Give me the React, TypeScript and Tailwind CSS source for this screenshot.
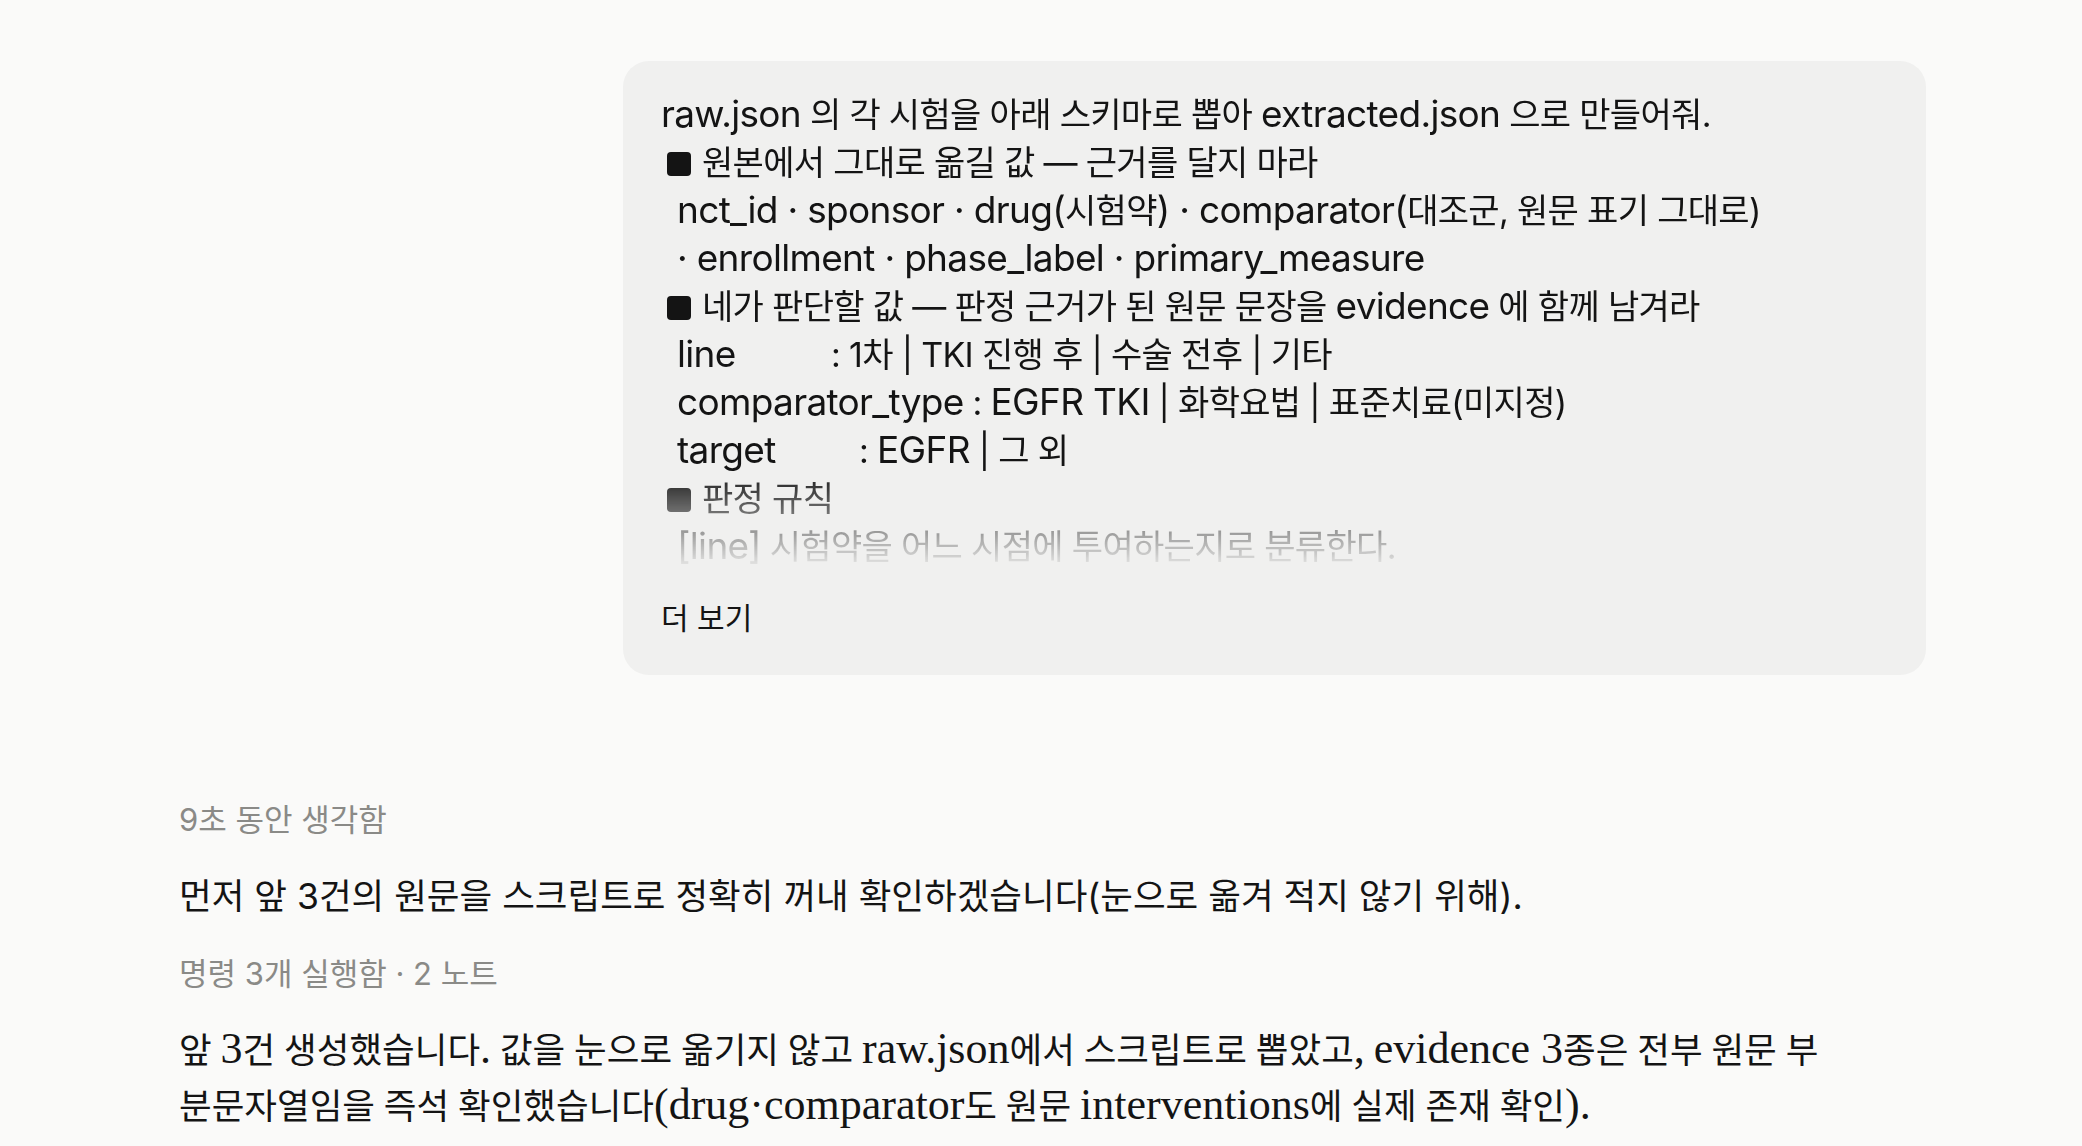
import React from "react";

const sans = "font-['Inter','Noto_Sans_CJK_KR',sans-serif]";

function Sq() {
  return <span className="inline-block w-[24px] h-[24px] rounded-[4px] bg-[#141414] align-[-1px] mr-[11px] ml-[6px]" />;
}

function L({ children }: { children: React.ReactNode }) {
  return <span className="text-[37px] leading-none">{children}</span>;
}

function S({ children }: { children: React.ReactNode }) {
  return <span className="text-[44px] leading-none">{children}</span>;
}

export default function App() {
  return (
    <div className="min-h-screen bg-[#fafaf9] text-[#141414]">
      <div className="w-[1747px] ml-[179px] pt-[61px]">
        {/* user bubble */}
        <div className="ml-auto w-[1303px] rounded-[26px] bg-[#f0f0ef] pl-[38px] pr-[38px] pt-[30px] pb-[39px]">
          <div
            className={`${sans} text-[34px] tracking-[-0.02em] leading-[48px] h-[480px] overflow-hidden whitespace-pre [mask-image:linear-gradient(to_bottom,black_79%,transparent_100%)]`}
          >
            <div><L>raw.json</L> 의 각 시험을 아래 스키마로 뽑아 <L>extracted.json</L> 으로 만들어줘.</div>
            <div><Sq />원본에서 그대로 옮길 값 — 근거를 달지 마라</div>
            <div className="pl-[16px]"><L>nct_id · sponsor · drug(</L>시험약<L>) · comparator(</L>대조군, 원문 표기 그대로)</div>
            <div className="pl-[16px]"><L>· enrollment · phase_label · primary_measure</L></div>
            <div><Sq />네가 판단할 값 — 판정 근거가 된 원문 문장을 <L>evidence</L> 에 함께 남겨라</div>
            <div className="pl-[16px]"><span className="inline-block w-[154px]"><L>line</L></span>: 1차 | TKI 진행 후 | 수술 전후 | 기타</div>
            <div className="pl-[16px]"><L>comparator_type</L> : <L>EGFR TKI</L> | 화학요법 | 표준치료(미지정)</div>
            <div className="pl-[16px]"><span className="inline-block w-[182px]"><L>target</L></span>: <L>EGFR</L> | 그 외</div>
            <div><Sq />판정 규칙</div>
            <div className="pl-[16px]"><L>[line]</L> 시험약을 어느 시점에 투여하는지로 분류한다.</div>
          </div>
          <div className={`${sans} mt-[29px] text-[30px] leading-[36px]`}>더 보기</div>
        </div>

        {/* assistant */}
        <div className={`${sans} mt-[125px] text-[31px] leading-[40px] text-[#8a8a87]`}>9초 동안 생각함</div>
        <div className={`${sans} mt-[32px] text-[35.5px] leading-[50px]`}>
          먼저 앞 3건의 원문을 스크립트로 정확히 꺼내 확인하겠습니다(눈으로 옮겨 적지 않기 위해).
        </div>
        <div className={`${sans} mt-[32px] text-[31px] leading-[40px] text-[#8a8a87]`}>명령 3개 실행함 · 2 노트</div>
        <div className="mt-[29px] font-['Liberation_Serif','Noto_Sans_CJK_KR',serif] text-[35.5px] leading-[56px] whitespace-nowrap">
          <div>
            앞 <S>3</S>건 생성했습니다<S>.</S> 값을 눈으로 옮기지 않고 <S>raw.json</S>에서 스크립트로 뽑았고<S>,</S> <S>evidence 3</S>종은 전부 원문 부
          </div>
          <div>
            분문자열임을 즉석 확인했습니다<S>(drug·comparator</S>도 원문 <S>interventions</S>에 실제 존재 확인<S>).</S>
          </div>
        </div>
      </div>
    </div>
  );
}
